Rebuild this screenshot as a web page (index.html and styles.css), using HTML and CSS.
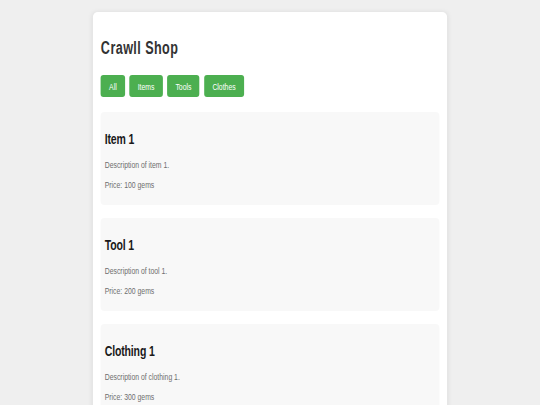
FILE: index.html
```html
<!DOCTYPE html>
<html lang="en">
<head>
<meta charset="utf-8">
<title>Crawll Shop</title>
<link rel="stylesheet" href="styles.css">
</head>
<body>
<div class="shop">
  <h1 class="shop-title">Crawll Shop</h1>
  <div class="filters">
    <button class="filter">All</button>
    <button class="filter">Items</button>
    <button class="filter">Tools</button>
    <button class="filter">Clothes</button>
  </div>
  <div class="products">
    <div class="product">
      <h3 class="product-name">Item 1</h3>
      <p class="product-text">Description of item 1.</p>
      <p class="product-text">Price: 100 gems</p>
    </div>
    <div class="product">
      <h3 class="product-name">Tool 1</h3>
      <p class="product-text">Description of tool 1.</p>
      <p class="product-text">Price: 200 gems</p>
    </div>
    <div class="product">
      <h3 class="product-name">Clothing 1</h3>
      <p class="product-text">Description of clothing 1.</p>
      <p class="product-text">Price: 300 gems</p>
    </div>
  </div>
</div>
</body>
</html>
```
FILE: styles.css
```css
html {
  background: #efefef;
}
body {
  margin: 0;
  padding-top: 12px;
  overflow: hidden;
  font-family: "Liberation Sans", Arial, sans-serif;
}
.shop {
  box-sizing: border-box;
  width: 506px;
  margin: 0 auto;
  padding: 12px 11.4px;
  background: #fff;
  border-radius: 7px / 5px;
  box-shadow: 0 0 6px rgba(0, 0, 0, 0.08);
  transform: scaleX(0.7);
  transform-origin: 50% 0;
}
.shop-title {
  margin: 14px 0 16px;
  font-size: 18px;
  line-height: 21px;
  font-weight: bold;
  letter-spacing: 0.6px;
  color: #333;
}
.filters {
  display: flex;
  gap: 6.6px;
  margin-bottom: 15px;
}
.filter {
  margin: 0;
  padding: 5.5px 11.7px;
  border: none;
  border-radius: 4px / 3px;
  background: #4caf50;
  color: #fff;
  font-family: "Liberation Sans", Arial, sans-serif;
  font-size: 9.8px;
  line-height: 11px;
}
.products {
  display: flex;
  flex-direction: column;
  gap: 13px;
}
.product {
  padding: 5.5px 5.5px;
  background: #f8f8f8;
  border-radius: 6px / 4px;
}
.product-name {
  margin: 12px 0;
  font-size: 15px;
  line-height: 17px;
  font-weight: bold;
  letter-spacing: -0.2px;
  color: #1a1a1a;
}
.product-text {
  margin: 9.5px 0;
  font-size: 9.8px;
  line-height: 11px;
  color: #6e6e6e;
}
```
